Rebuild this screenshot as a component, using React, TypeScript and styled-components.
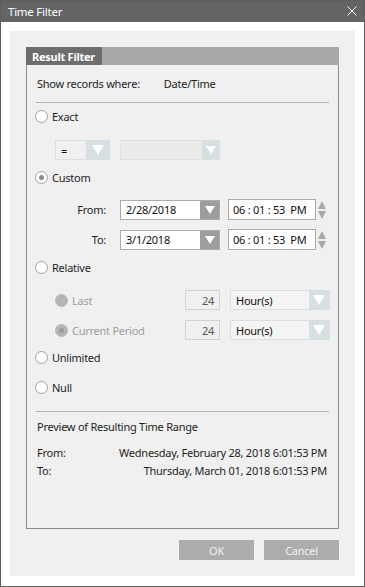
import React from 'react'
import styled, { createGlobalStyle } from 'styled-components'

const GlobalStyle = createGlobalStyle`
  html, body {
    margin: 0;
    padding: 0;
    background: #ffffff;
  }
  * {
    box-sizing: border-box;
  }
  body {
    font-family: 'Noto Sans', 'Open Sans', sans-serif;
    font-size: 11px;
    letter-spacing: -0.25px;
    color: #1e1e1e;
  }
`

const Window = styled.div`
  width: 365px;
  height: 587px;
  border: 1px solid #5e5e5e;
  display: flex;
  flex-direction: column;
  background: #ffffff;
`

const TitleBar = styled.div`
  height: 21px;
  background: #646464;
  color: #ffffff;
  display: flex;
  align-items: center;
  justify-content: space-between;
  padding: 0 7px 1px 7px;
  font-size: 11.5px;
  flex-shrink: 0;
`

const Body = styled.div`
  flex: 1;
  padding: 9px 9px 10px 9px;
  display: flex;
`

const Panel = styled.div`
  flex: 1;
  background: #f0f0f0;
  padding: 16px 16px 0 16px;
  display: flex;
  flex-direction: column;
`

const TabBar = styled.div`
  height: 18px;
  background: #a9a9a9;
  display: flex;
`

const Tab = styled.div`
  width: 76px;
  background: #6d6d6d;
  color: #ffffff;
  font-weight: bold;
  display: flex;
  align-items: center;
  padding-left: 6px;
  white-space: nowrap;
`

const Group = styled.div`
  height: 464px;
  border: 1px solid #8c8c8c;
  border-top: none;
  display: flex;
  flex-direction: column;
`

const HeaderRow = styled.div`
  height: 37px;
  display: flex;
  align-items: center;
  padding-left: 10px;
  gap: 24px;
`

const Separator = styled.div`
  height: 1px;
  background: #b4b4b4;
  margin: 0 9px 0 9px;
`

const OptionRow = styled.div<{ $h?: number; $mt?: number; $indent?: number }>`
  height: ${(p) => p.$h ?? 26}px;
  margin-top: ${(p) => p.$mt ?? 0}px;
  display: flex;
  align-items: center;
  padding-left: ${(p) => p.$indent ?? 8}px;
`

const RadioCircle = styled.span<{ $checked?: boolean; $disabled?: boolean }>`
  width: 13px;
  height: 13px;
  border-radius: 50%;
  border: 1px solid ${(p) => (p.$disabled ? '#b8b8b8' : '#a2a2a2')};
  background: ${(p) => (p.$disabled ? '#b4b4b4' : '#ffffff')};
  display: flex;
  align-items: center;
  justify-content: center;
  flex-shrink: 0;
  &::after {
    content: '';
    display: ${(p) => (p.$checked ? 'block' : 'none')};
    width: 5px;
    height: 5px;
    border-radius: 50%;
    background: ${(p) => (p.$disabled ? '#9a9a9a' : '#8a8a8a')};
  }
`

const RadioLabel = styled.span<{ $disabled?: boolean }>`
  margin-left: 4px;
  color: ${(p) => (p.$disabled ? '#9e9e9e' : '#1e1e1e')};
`

const Select = styled.div<{ $w: number; $bg: string; $border: string }>`
  width: ${(p) => p.$w}px;
  height: 20px;
  background: ${(p) => p.$bg};
  border: 1px solid ${(p) => p.$border};
  display: flex;
  align-items: stretch;
`

const SelectText = styled.div`
  flex: 1;
  display: flex;
  align-items: center;
  padding-left: 5px;
  color: #111;
`

const ArrowBox = styled.div<{ $w: number; $bg: string }>`
  width: ${(p) => p.$w}px;
  background: ${(p) => p.$bg};
  display: flex;
  align-items: center;
  justify-content: center;
`

const TriangleDown = styled.span<{ $size?: number }>`
  width: 0;
  height: 0;
  border-left: ${(p) => (p.$size ?? 12) / 2}px solid transparent;
  border-right: ${(p) => (p.$size ?? 12) / 2}px solid transparent;
  border-top: ${(p) => ((p.$size ?? 12) * 0.8).toFixed(0)}px solid #ffffff;
`

const DateLabel = styled.div`
  width: 51px;
  text-align: right;
  margin-right: 14px;
`

const DateRow = styled.div<{ $mt: number }>`
  height: 21px;
  margin-top: ${(p) => p.$mt}px;
  display: flex;
  align-items: center;
  padding-left: 28px;
`

const TimeBox = styled.div`
  width: 88px;
  height: 21px;
  margin-left: 8px;
  background: #ffffff;
  border: 1px solid #ababab;
  display: flex;
  align-items: center;
  padding-left: 4px;
  color: #111;
  white-space: pre;
`

const Spinner = styled.div`
  display: flex;
  flex-direction: column;
  gap: 2px;
  margin-left: 2px;
`

const SpinTri = styled.span<{ $up?: boolean }>`
  width: 0;
  height: 0;
  border-left: 4px solid transparent;
  border-right: 4px solid transparent;
  ${(p) => (p.$up ? 'border-bottom' : 'border-top')}: 8px solid #a8a8a8;
`

const NumBox = styled.div`
  width: 35px;
  height: 20px;
  border: 1px solid #d2d2d2;
  background: #f0f0f0;
  color: #555;
  display: flex;
  align-items: center;
  justify-content: flex-end;
  padding-right: 5px;
  margin-left: auto;
`

const SubRow = styled.div<{ $mt: number }>`
  height: 20px;
  margin-top: ${(p) => p.$mt}px;
  display: flex;
  align-items: center;
  padding-left: 28px;
  padding-right: 8px;
`

const Spacer = styled.div`
  width: 10px;
`

const PreviewTitle = styled.div`
  margin-top: 7px;
  height: 16px;
  line-height: 16px;
  padding-left: 10px;
`

const PreviewRow = styled.div<{ $mt: number }>`
  height: 16px;
  line-height: 16px;
  margin-top: ${(p) => p.$mt}px;
  display: flex;
  justify-content: space-between;
  padding: 0 11px 0 10px;
`

const ButtonRow = styled.div`
  display: flex;
  justify-content: flex-end;
  gap: 10px;
  margin-top: 11px;
`

const Button = styled.div`
  width: 75px;
  height: 20px;
  background: #acacac;
  color: #f2f2f2;
  display: flex;
  align-items: center;
  justify-content: center;
`

const Radio: React.FC<{ label: string; checked?: boolean; disabled?: boolean }> = ({
  label,
  checked,
  disabled,
}) => (
  <>
    <RadioCircle $checked={checked} $disabled={disabled} />
    <RadioLabel $disabled={disabled}>{label}</RadioLabel>
  </>
)

const App: React.FC = () => {
  return (
    <>
      <GlobalStyle />
      <Window>
        <TitleBar>
          <span>Time Filter</span>
          <svg width="10" height="10" viewBox="0 0 10 10">
            <path d="M0.5 0.5L9.5 9.5M9.5 0.5L0.5 9.5" stroke="#ffffff" strokeWidth="1" />
          </svg>
        </TitleBar>
        <Body>
          <Panel>
            <TabBar>
              <Tab>Result Filter</Tab>
            </TabBar>
            <Group>
              <HeaderRow>
                <span>Show records where:</span>
                <span>Date/Time</span>
              </HeaderRow>
              <Separator />
              <OptionRow>
                <Radio label="Exact" />
              </OptionRow>
              <OptionRow $h={20} $mt={11} $indent={28}>
                <Select $w={55} $bg="#f0f0f0" $border="#d6e0e3">
                  <SelectText>=</SelectText>
                  <ArrowBox $w={23} $bg="#d6e0e3">
                    <TriangleDown />
                  </ArrowBox>
                </Select>
                <Spacer />
                <Select $w={100} $bg="#ebebeb" $border="#e0e0e0">
                  <SelectText />
                  <ArrowBox $w={17} $bg="#d6e0e3">
                    <TriangleDown $size={10} />
                  </ArrowBox>
                </Select>
              </OptionRow>
              <OptionRow $mt={4}>
                <Radio label="Custom" checked />
              </OptionRow>
              <DateRow $mt={9}>
                <DateLabel>From:</DateLabel>
                <Select $w={100} $bg="#ffffff" $border="#ababab">
                  <SelectText>2/28/2018</SelectText>
                  <ArrowBox $w={19} $bg="#9d9d9d">
                    <TriangleDown $size={10} />
                  </ArrowBox>
                </Select>
                <TimeBox>06 : 01 : 53  PM</TimeBox>
                <Spinner>
                  <SpinTri $up />
                  <SpinTri />
                </Spinner>
              </DateRow>
              <DateRow $mt={9}>
                <DateLabel>To:</DateLabel>
                <Select $w={100} $bg="#ffffff" $border="#ababab">
                  <SelectText>3/1/2018</SelectText>
                  <ArrowBox $w={19} $bg="#9d9d9d">
                    <TriangleDown $size={10} />
                  </ArrowBox>
                </Select>
                <TimeBox>06 : 01 : 53  PM</TimeBox>
                <Spinner>
                  <SpinTri $up />
                  <SpinTri />
                </Spinner>
              </DateRow>
              <OptionRow $mt={4}>
                <Radio label="Relative" />
              </OptionRow>
              <SubRow $mt={10}>
                <Radio label="Last" disabled />
                <NumBox>24</NumBox>
                <Spacer />
                <Select $w={100} $bg="#f4f4f4" $border="#d6e0e3">
                  <SelectText>Hour(s)</SelectText>
                  <ArrowBox $w={20} $bg="#d6e0e3">
                    <TriangleDown />
                  </ArrowBox>
                </Select>
              </SubRow>
              <SubRow $mt={10}>
                <Radio label="Current Period" checked disabled />
                <NumBox>24</NumBox>
                <Spacer />
                <Select $w={100} $bg="#f4f4f4" $border="#d6e0e3">
                  <SelectText>Hour(s)</SelectText>
                  <ArrowBox $w={20} $bg="#d6e0e3">
                    <TriangleDown />
                  </ArrowBox>
                </Select>
              </SubRow>
              <OptionRow $mt={4}>
                <Radio label="Unlimited" />
              </OptionRow>
              <OptionRow $mt={4}>
                <Radio label="Null" />
              </OptionRow>
              <OptionRow $h={11} />
              <Separator />
              <PreviewTitle>Preview of Resulting Time Range</PreviewTitle>
              <PreviewRow $mt={10}>
                <span>From:</span>
                <span>Wednesday, February 28, 2018 6:01:53 PM</span>
              </PreviewRow>
              <PreviewRow $mt={2}>
                <span>To:</span>
                <span>Thursday, March 01, 2018 6:01:53 PM</span>
              </PreviewRow>
            </Group>
            <ButtonRow>
              <Button>OK</Button>
              <Button>Cancel</Button>
            </ButtonRow>
          </Panel>
        </Body>
      </Window>
    </>
  )
}

export default App
